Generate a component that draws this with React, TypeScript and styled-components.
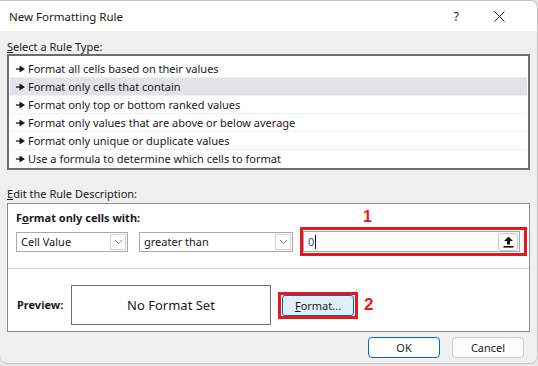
import React from "react";
import styled, { createGlobalStyle } from "styled-components";

const GlobalStyle = createGlobalStyle`
  html, body {
    margin: 0;
    padding: 0;
    background: #e6e6e6;
    font-family: "Noto Sans", "Open Sans", sans-serif;
    font-size: 11px;
    color: #1a1a1a;
  }
  * {
    box-sizing: border-box;
  }
`;

const ruleTypes = [
  "Format all cells based on their values",
  "Format only cells that contain",
  "Format only top or bottom ranked values",
  "Format only values that are above or below average",
  "Format only unique or duplicate values",
  "Use a formula to determine which cells to format",
];

const ArrowGlyph = () => (
  <svg width="9" height="8" viewBox="0 0 9 8">
    <rect x="0" y="3.4" width="5" height="1.3" fill="#1a1a1a" />
    <path d="M3.5 0.5 L9 4 L3.5 7.5 Z" fill="#1a1a1a" />
  </svg>
);

const Chevron = () => (
  <svg width="9" height="6" viewBox="0 0 9 6">
    <path d="M1 1 L4.5 4.5 L8 1" stroke="#8a8a8a" strokeWidth="1" fill="none" />
  </svg>
);

const UploadIcon = () => (
  <svg width="11" height="12" viewBox="0 0 11 12">
    <path d="M5.5 0.5 L10 5 L7 5 L7 8.5 L4 8.5 L4 5 L1 5 Z" fill="#111" />
    <rect x="0.5" y="10" width="10" height="1.6" fill="#111" />
  </svg>
);

const CloseIcon = () => (
  <svg width="11" height="11" viewBox="0 0 11 11">
    <path d="M0.5 0.5 L10.5 10.5 M10.5 0.5 L0.5 10.5" stroke="#222" strokeWidth="1" />
  </svg>
);

export default function App() {
  return (
    <>
      <GlobalStyle />
      <Window>
        <TitleBar>
          <Title>New Formatting Rule</Title>
          <TitleButtons>
            <HelpMark>?</HelpMark>
            <CloseIcon />
          </TitleButtons>
        </TitleBar>
        <Body>
          <SectionLabel>
            <u>S</u>elect a Rule Type:
          </SectionLabel>
          <RuleList>
            {ruleTypes.map((r, i) => (
              <RuleRow key={r} $selected={i === 1} $last={i === ruleTypes.length - 1}>
                <ArrowGlyph />
                <span>{r}</span>
              </RuleRow>
            ))}
          </RuleList>

          <SectionLabel $gap>
            <u>E</u>dit the Rule Description:
          </SectionLabel>
          <GroupBox>
            <TopPart>
              <BoldLabel>
                F<u>o</u>rmat only cells with:
              </BoldLabel>
              <ConditionRow>
                <Select $width={112}>
                  <span>Cell Value</span>
                  <DropButton>
                    <Chevron />
                  </DropButton>
                </Select>
                <Select $width={154}>
                  <span>greater than</span>
                  <DropButton>
                    <Chevron />
                  </DropButton>
                </Select>
                <Highlight $pad="1px 4px 1px 0">
                  <Callout>1</Callout>
                  <ValueInput>
                    <ValueText>0</ValueText>
                    <Caret />
                    <RefButton>
                      <UploadIcon />
                    </RefButton>
                  </ValueInput>
                </Highlight>
              </ConditionRow>
            </TopPart>
            <PreviewPart>
              <BoldLabel>Preview:</BoldLabel>
              <PreviewBox>No Format Set</PreviewBox>
              <Highlight $pad="0 1px">
                <FormatButton>
                  <u>F</u>ormat...
                </FormatButton>
              </Highlight>
              <SideCallout>2</SideCallout>
            </PreviewPart>
          </GroupBox>
          <Footer>
            <DialogButton $primary>OK</DialogButton>
            <DialogButton>Cancel</DialogButton>
          </Footer>
        </Body>
      </Window>
    </>
  );
}

const Window = styled.div`
  width: 538px;
  height: 364px;
  background: #f0f0f0;
  border: 1px solid #c4c4c4;
  border-left: none;
  border-radius: 0 8px 8px 8px;
  overflow: hidden;
  display: flex;
  flex-direction: column;
`;

const TitleBar = styled.div`
  height: 30px;
  flex: none;
  background: #ffffff;
  display: flex;
  align-items: center;
  justify-content: space-between;
  padding-left: 9px;
`;

const Title = styled.div`
  font-size: 11.5px;
  color: #1a1a1a;
  padding-top: 1px;
`;

const TitleButtons = styled.div`
  display: flex;
  align-items: center;
  gap: 35px;
  padding-right: 32px;
`;

const HelpMark = styled.div`
  font-size: 12px;
`;

const Body = styled.div`
  flex: 1;
  padding: 8px 7px 0 7px;
  display: flex;
  flex-direction: column;
`;

const SectionLabel = styled.div<{ $gap?: boolean }>`
  height: 15px;
  line-height: 15px;
  font-size: 11px;
  margin-top: ${(p) => (p.$gap ? "16px" : "0")};
  margin-bottom: ${(p) => (p.$gap ? "2px" : "0")};
`;

const RuleList = styled.div`
  width: 523px;
  background: #ffffff;
  border: 2px solid #6e6e6e;
  padding: 4px 1px 0 1px;
`;

const RuleRow = styled.div<{ $selected?: boolean; $last?: boolean }>`
  height: 18px;
  display: flex;
  align-items: center;
  gap: 3px;
  padding-left: 6px;
  background: ${(p) => (p.$selected ? "#e2e2e8" : "#ffffff")};
  border-bottom: 1px solid ${(p) => (p.$last ? "transparent" : "#f0f0f0")};
  font-size: 11px;
  white-space: nowrap;
  svg {
    flex: none;
    margin-top: 1px;
  }
`;

const GroupBox = styled.div`
  width: 523px;
  height: 129px;
  flex: none;
  background: #ffffff;
  border: 1px solid #8c8c8c;
  display: flex;
  flex-direction: column;
`;

const TopPart = styled.div`
  height: 65px;
  flex: none;
  border-bottom: 1px solid #d6d6d6;
  padding: 6px 0 0 8px;
`;

const BoldLabel = styled.div`
  font-weight: 700;
  font-size: 11px;
  line-height: 16px;
`;

const ConditionRow = styled.div`
  margin-top: 1px;
  display: flex;
  align-items: center;
  gap: 11px;
  > * {
    flex: none;
  }
`;

const Select = styled.div<{ $width: number }>`
  width: ${(p) => p.$width}px;
  height: 20px;
  border: 1px solid #a8a8a8;
  display: flex;
  align-items: center;
  justify-content: space-between;
  padding: 0 1px 0 4px;
  font-size: 11px;
  background: #ffffff;
  & + & {
    margin-right: -4px;
  }
`;

const DropButton = styled.div`
  width: 16px;
  height: 16px;
  border: 1px solid #d4d4d4;
  display: flex;
  align-items: center;
  justify-content: center;
`;

const Highlight = styled.div<{ $pad: string }>`
  position: relative;
  border: 3px solid #e8161f;
  padding: ${(p) => p.$pad};
`;

const Callout = styled.div`
  position: absolute;
  left: 60px;
  top: -22px;
  color: #e8161f;
  font-family: "Liberation Sans", Arial, sans-serif;
  font-weight: 700;
  font-size: 16px;
`;

const SideCallout = styled.div`
  color: #e8161f;
  font-family: "Liberation Sans", Arial, sans-serif;
  font-weight: 700;
  font-size: 17px;
  margin-left: 6px;
`;

const ValueInput = styled.div`
  width: 217px;
  height: 21px;
  border: 1px solid #a8a8a8;
  display: flex;
  align-items: center;
  padding-left: 4px;
  padding-right: 1px;
`;

const ValueText = styled.span`
  color: #1f4d9a;
  font-size: 11px;
`;

const Caret = styled.span`
  width: 1px;
  height: 14px;
  background: #111;
  margin-left: 1px;
`;

const RefButton = styled.div`
  margin-left: auto;
  width: 20px;
  height: 18px;
  border: 1px solid #c8c8c8;
  border-radius: 3px;
  background: #fdfdfd;
  display: flex;
  align-items: center;
  justify-content: center;
`;

const PreviewPart = styled.div`
  flex: 1;
  display: flex;
  align-items: center;
  padding: 10px 0 0 9px;
  ${BoldLabel} {
    width: 54px;
  }
`;

const PreviewBox = styled.div`
  width: 200px;
  height: 40px;
  border: 1px solid #6e6e6e;
  display: flex;
  align-items: center;
  justify-content: center;
  font-size: 13px;
  margin-right: 7px;
`;

const FormatButton = styled.div`
  width: 72px;
  height: 21px;
  border: 1px solid #0067c0;
  border-radius: 3px;
  background: #e0eef9;
  display: flex;
  align-items: center;
  justify-content: center;
  font-size: 11px;
`;

const Footer = styled.div`
  display: flex;
  justify-content: flex-end;
  gap: 12px;
  padding: 5px 6px 0 0;
`;

const DialogButton = styled.div<{ $primary?: boolean }>`
  width: 72px;
  height: 21px;
  border: 1px solid ${(p) => (p.$primary ? "#0067c0" : "#d0d0d0")};
  border-radius: 4px;
  background: ${(p) => (p.$primary ? "#ffffff" : "#fdfdfd")};
  display: flex;
  align-items: center;
  justify-content: center;
  font-size: 11px;
`;
